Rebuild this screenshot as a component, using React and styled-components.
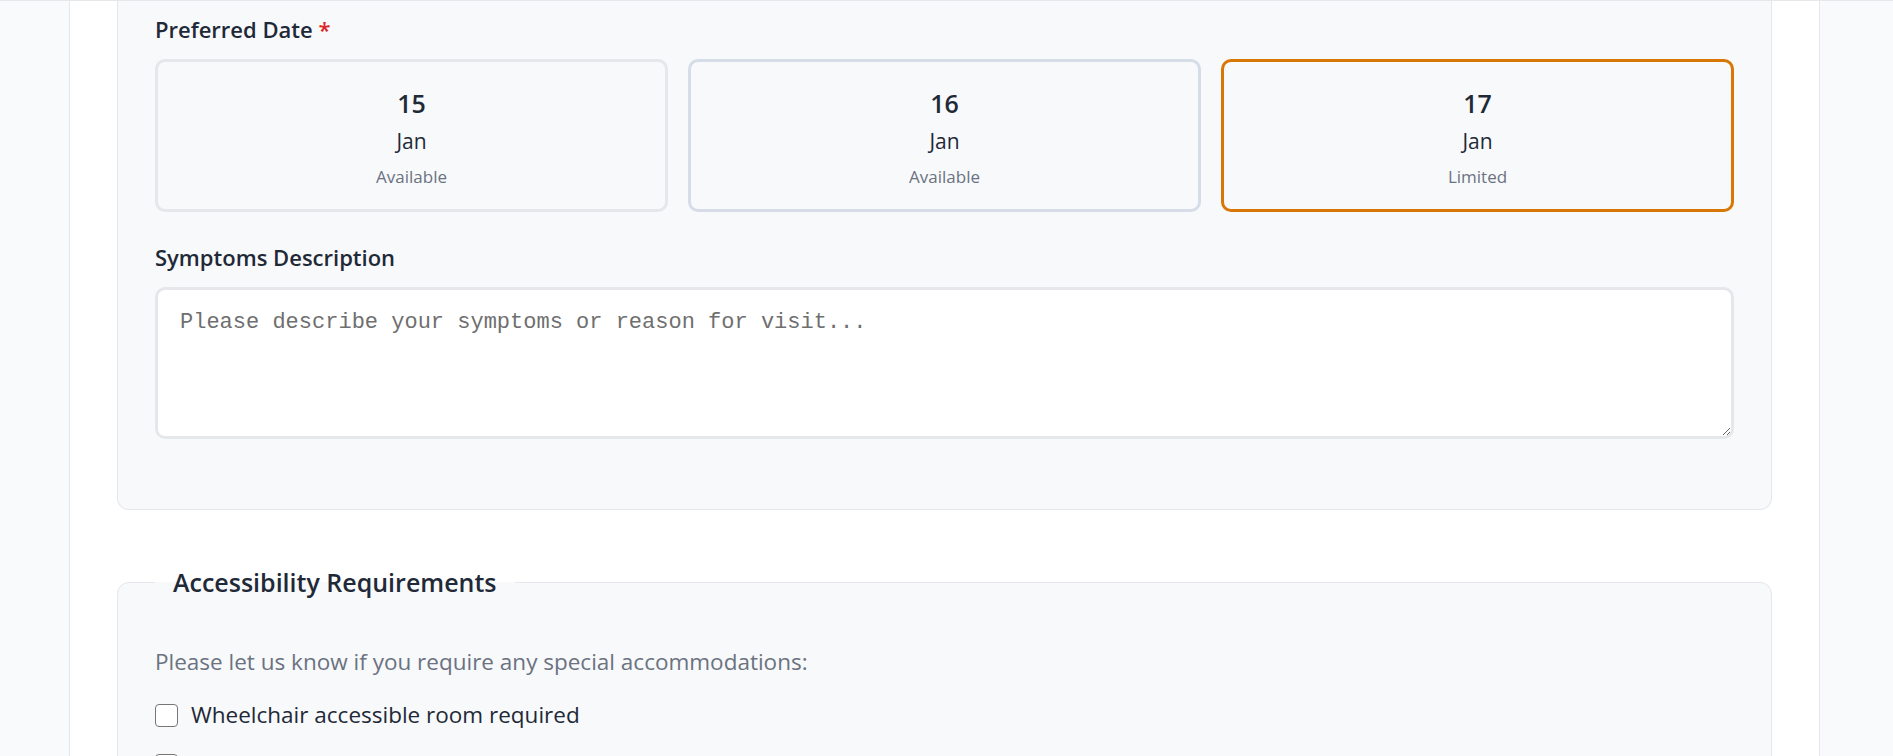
import styled, { createGlobalStyle } from 'styled-components';

const GlobalStyle = createGlobalStyle`
  body {
    margin: 0;
    background: #f9fafb;
    font-family: 'Open Sans', 'Noto Sans', sans-serif;
    color: #1f2937;
  }
`;

const Page = styled.div`
  display: flex;
  justify-content: center;
  border-top: 1px solid #e5e7eb;
  min-height: 755px;
`;

const Column = styled.main`
  width: 1655px;
  background: #fff;
  border-left: 1px solid #e5e7eb;
  border-right: 1px solid #e5e7eb;
  padding: 0 47px;
  margin-left: -4px;
`;

const Panel = styled.fieldset`
  margin: 0;
  min-width: 0;
  background: #f8f9fb;
  border: 1px solid #e5e7eb;
  border-radius: 12px;
  padding: 0 37px;

  ${p => p.$continued && `
    border-top: none;
    border-top-left-radius: 0;
    border-top-right-radius: 0;
    padding-top: 16px;
    padding-bottom: 70px;
  `}
  & + & {
    margin-top: 57px;
  }
`;

const Legend = styled.legend`
  padding: 0 18px;
  font-size: 25px;
  line-height: 30px;
  font-weight: 600;
  color: #1f2937;
`;

const Label = styled.label`
  display: block;
  font-size: 22px;
  line-height: 24px;
  font-weight: 600;
  margin-bottom: 18px;
`;

const Required = styled.span`
  color: #dc2626;
`;

const DateGrid = styled.div`
  display: grid;
  grid-template-columns: repeat(3, 1fr);
  gap: 20px;
  margin-bottom: 33px;
`;

const DateCard = styled.button`
  display: flex;
  flex-direction: column;
  align-items: center;
  padding: 25px 0 20px;
  background: #f8f9fb;
  border: 3px solid ${p => p.$selected ? '#d97706' : p.$hover ? '#d6dce8' : '#e5e7eb'};
  border-radius: 10px;
  font-family: inherit;
  color: #1f2937;
  cursor: pointer;
`;

const Day = styled.span`
  font-size: 25px;
  line-height: 32px;
  font-weight: 600;
`;

const Month = styled.span`
  margin-top: 8px;
  font-size: 21px;
  line-height: 28px;
`;

const Status = styled.span`
  margin-top: 10px;
  font-size: 17px;
  line-height: 24px;
  color: #6b7280;
`;

const TextArea = styled.textarea`
  display: block;
  box-sizing: border-box;
  width: 100%;
  height: 152px;
  padding: 20px 22px;
  background: #fff;
  border: 3px solid #e5e7eb;
  border-radius: 10px;
  font-family: 'Liberation Mono', 'DejaVu Sans Mono', monospace;
  font-size: 22px;
  line-height: 26px;
  color: #1f2937;
  resize: vertical;
  outline: none;

  &::placeholder {
    color: #6f6f6f;
  }
`;

const Hint = styled.p`
  margin: 51px 0 25px;
  font-size: 22.5px;
  line-height: 28px;
  color: #6b7280;
`;

const CheckList = styled.div`
  display: flex;
  flex-direction: column;
  gap: 22px;
  padding-bottom: 40px;
`;

const CheckRow = styled.label`
  display: flex;
  align-items: center;
  gap: 13px;
  font-size: 22.5px;
  line-height: 28px;
  color: #1f2937;
`;

const CheckBox = styled.input`
  appearance: none;
  flex: none;
  margin: 0;
  width: 23px;
  height: 23px;
  border: 1.5px solid #767676;
  border-radius: 4px;
  background: #fff;
`;

const dates = [
  { day: 15, month: 'Jan', status: 'Available' },
  { day: 16, month: 'Jan', status: 'Available', hover: true },
  { day: 17, month: 'Jan', status: 'Limited', selected: true },
];

const needs = [
  'Wheelchair accessible room required',
  'Sign language interpreter needed',
  'Large print materials',
];

export default function App() {
  return (
    <>
      <GlobalStyle />
      <Page>
        <Column>
          <Panel $continued>
            <Label>Preferred Date <Required>*</Required></Label>
            <DateGrid>
              {dates.map(d => (
                <DateCard key={d.day} type='button' $selected={d.selected} $hover={d.hover}>
                  <Day>{d.day}</Day>
                  <Month>{d.month}</Month>
                  <Status>{d.status}</Status>
                </DateCard>
              ))}
            </DateGrid>
            <Label htmlFor='symptoms'>Symptoms Description</Label>
            <TextArea id='symptoms' placeholder='Please describe your symptoms or reason for visit...' />
          </Panel>
          <Panel>
            <Legend>Accessibility Requirements</Legend>
            <Hint>Please let us know if you require any special accommodations:</Hint>
            <CheckList>
              {needs.map(n => (
                <CheckRow key={n}>
                  <CheckBox type='checkbox' />
                  {n}
                </CheckRow>
              ))}
            </CheckList>
          </Panel>
        </Column>
      </Page>
    </>
  );
}
